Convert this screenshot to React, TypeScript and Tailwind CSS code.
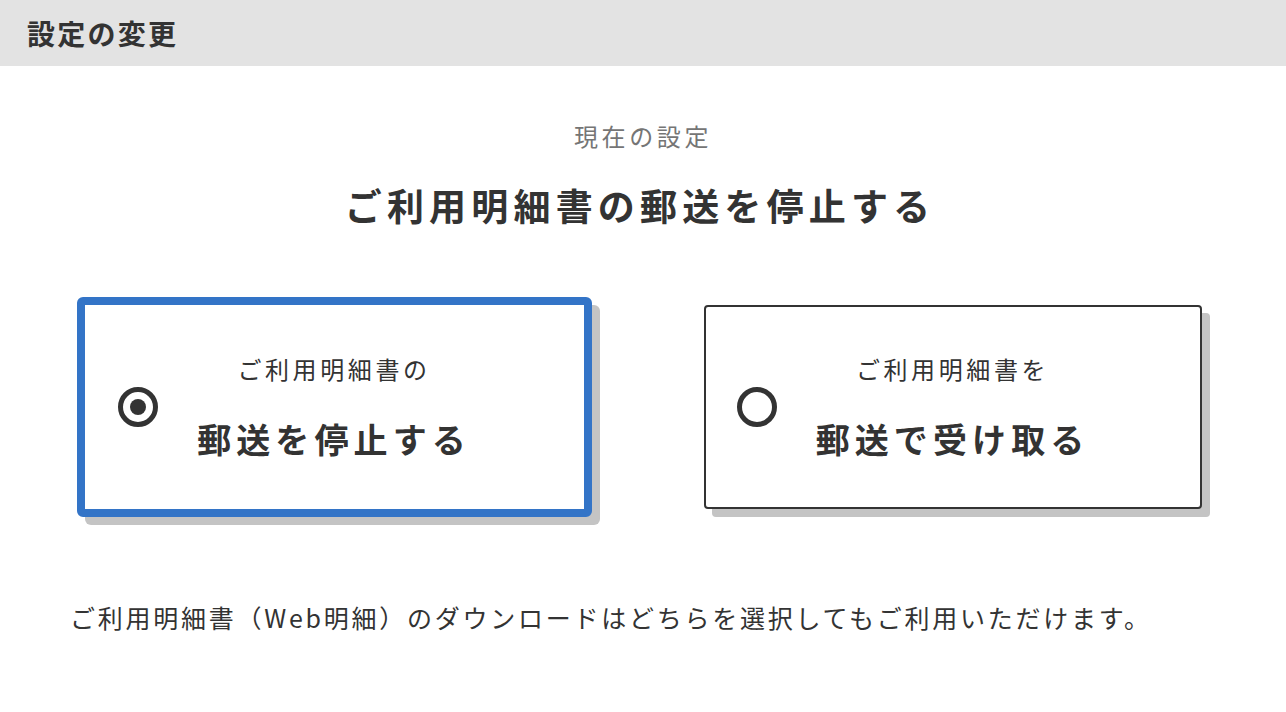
const font = "font-['Noto_Sans_CJK_JP','Noto_Sans',sans-serif]";

type OptionProps = {
  selected: boolean;
  lead: string;
  main: string;
};

const Radio = ({ selected }: { selected: boolean }) => (
  <span className="flex h-10 w-10 items-center justify-center rounded-full border-[5px] border-[#333]">
    {selected && <span className="h-4 w-4 rounded-full bg-[#333]" />}
  </span>
);

const OptionCard = ({ selected, lead, main }: OptionProps) => (
  <div
    className={
      selected
        ? 'relative m-[-8px] flex h-[220px] w-[515px] items-center justify-center rounded-[6px] border-[8px] border-[#3374c7] bg-white shadow-[8px_8px_0_#c4c4c4]'
        : 'relative flex h-[204px] w-[498px] items-center justify-center rounded-[4px] border-2 border-[#333] bg-white shadow-[8px_8px_0_#c4c4c4]'
    }
  >
    <div className={selected ? 'absolute left-[33px] top-1/2 -translate-y-1/2' : 'absolute left-[31px] top-1/2 -translate-y-1/2'}>
      <Radio selected={selected} />
    </div>
    <div className="flex flex-col items-center pb-[3px] text-[#333]">
      <p className="text-[24px] leading-[36px] tracking-[0.15em]">{lead}</p>
      <p className="mt-[30px] text-[34px] font-bold leading-[44px] tracking-[0.15em]">{main}</p>
    </div>
  </div>
);

const App = () => {
  return (
    <div className={`min-h-screen w-full bg-white text-[#333] ${font}`}>
      {/* header */}
      <div className="flex h-[66px] items-center bg-[#e3e3e3] px-[27px]">
        <h1 className="text-[28px] font-bold tracking-[0.08em]">設定の変更</h1>
      </div>

      <main className="flex flex-col items-center pt-[52px]">
        <p className="text-[24px] leading-[36px] tracking-[0.15em] text-[#757575]">現在の設定</p>
        <h2 className="mt-[27px] pr-[6px] text-[37px] font-bold leading-[48px] tracking-[0.14em]">ご利用明細書の郵送を停止する</h2>

        <div className="mt-[76px] flex w-full justify-center gap-[120px]">
          <OptionCard selected lead="ご利用明細書の" main="郵送を停止する" />
          <OptionCard selected={false} lead="ご利用明細書を" main="郵送で受け取る" />
        </div>

        <p className="mt-[90px] w-full px-[70px] text-[25px] leading-[36px] tracking-[0.11em]">
          ご利用明細書（Web明細）のダウンロードはどちらを選択してもご利用いただけます。
        </p>
      </main>
    </div>
  );
};

export default App;
